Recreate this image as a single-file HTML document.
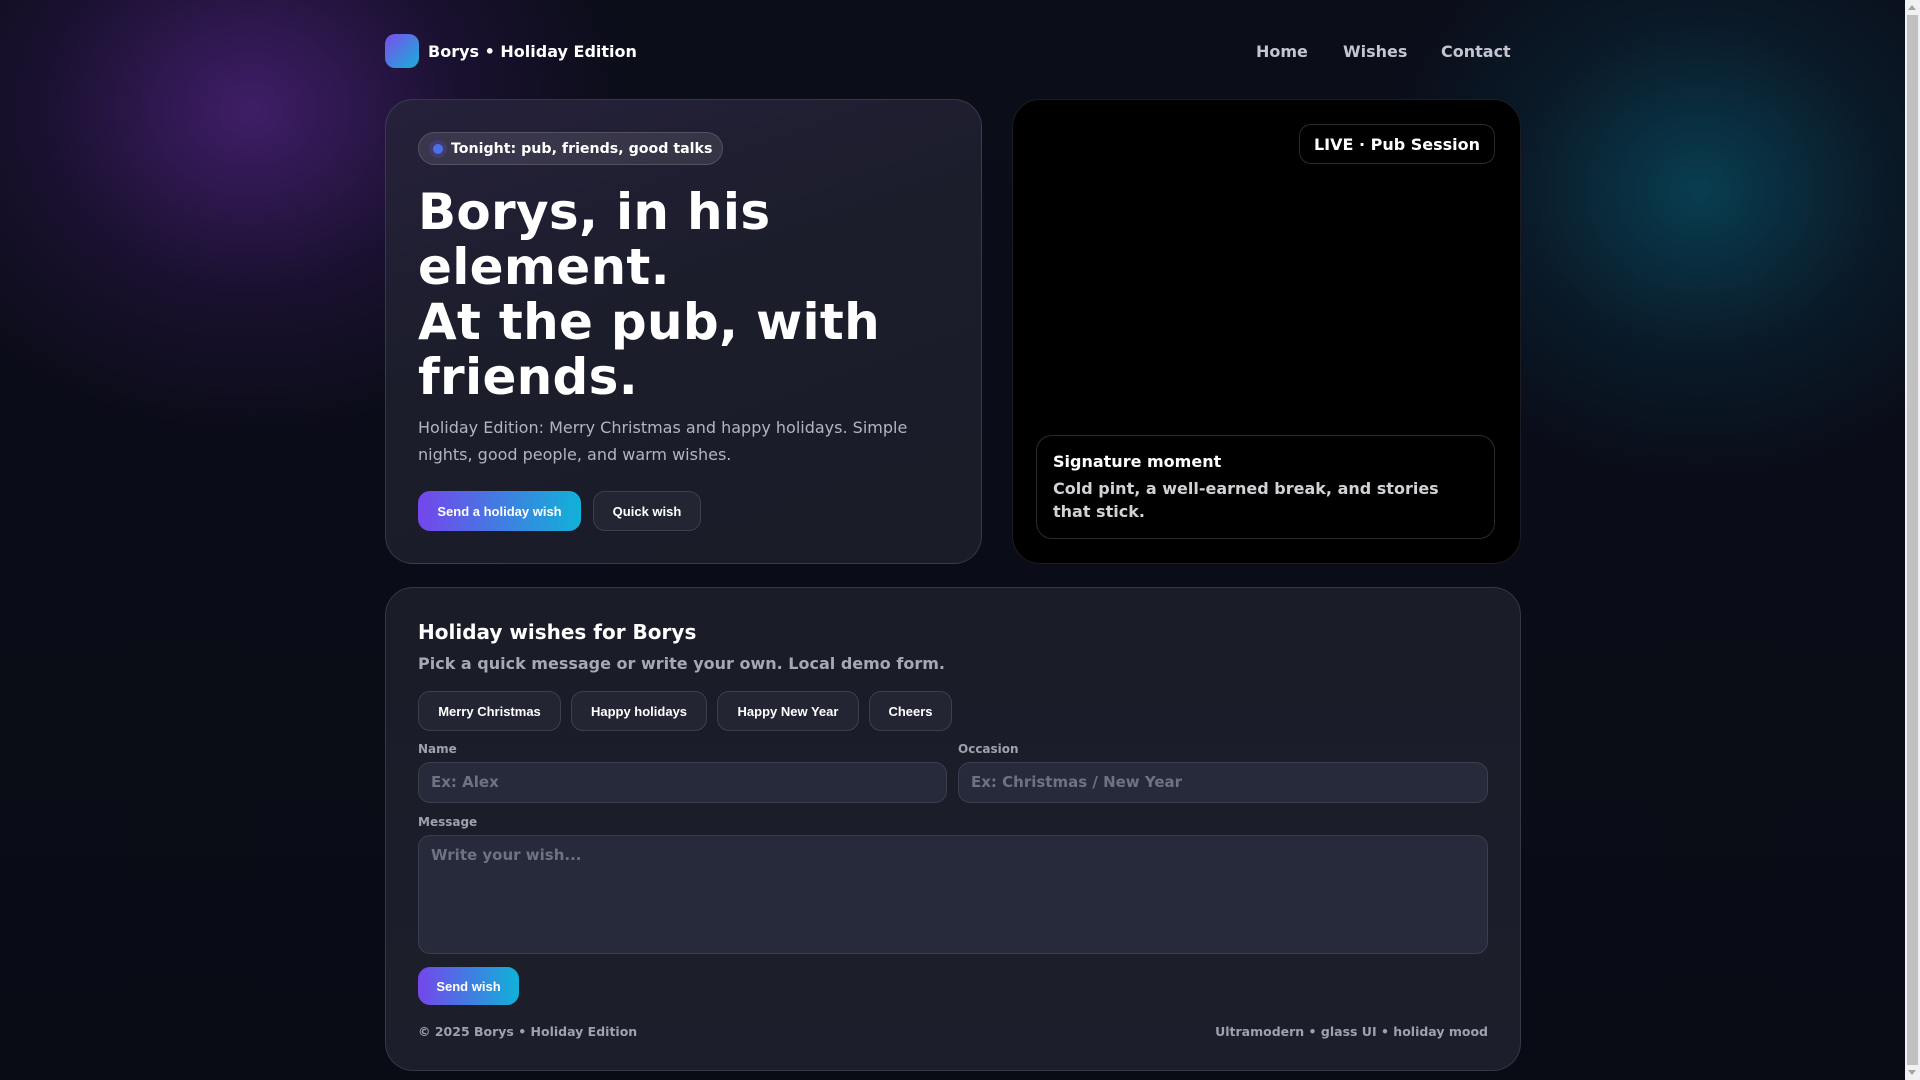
<!DOCTYPE html>
<html><head><meta charset="utf-8"><style>
*{box-sizing:border-box;margin:0;padding:0}
html,body{width:1920px;height:1080px;overflow:hidden}
body{background:#0a0c16;font-family:"DejaVu Sans","Liberation Sans",sans-serif;color:#fff;position:relative}
.bg{position:absolute;left:0;top:0;width:1905px;height:1080px;
background:radial-gradient(ellipse 380px 330px at 250px 110px,rgba(80,35,130,.75),rgba(60,25,100,.3) 55%,transparent 100%),
radial-gradient(ellipse 330px 300px at 1700px 190px,rgba(8,70,90,.85),rgba(8,50,70,.35) 55%,transparent 100%),
linear-gradient(#0b0d19,#090b15);}
.sb{position:absolute;left:1905px;top:0;width:15px;height:1080px;background:#f1f1f1}
.sb .th{position:absolute;left:2px;top:15px;width:11px;height:1050px;background:#c1c1c1}
.sb .up{position:absolute;left:3px;top:5px;border:4px solid transparent;border-bottom:5px solid #a3a3a3;border-top:0}
.sb .dn{position:absolute;left:3px;bottom:5px;border:4px solid transparent;border-top:5px solid #a3a3a3;border-bottom:0}
.a{position:absolute}
.logo{left:385px;top:34px;width:34px;height:34px;border-radius:10px;background:linear-gradient(135deg,#7c4dec,#16b0d8)}
.brand{left:428px;top:42px;font-size:16px;font-weight:bold}
.nav{top:42px;font-size:16px;font-weight:bold;color:#c3c6d0}
.card{border-radius:28px;border:1px solid rgba(255,255,255,.12)}
.hero{left:385px;top:99px;width:597px;height:465px;background:linear-gradient(160deg,#26213c,#1b1d2a 45%,#1a1c28)}
.media{left:1012px;top:99px;width:509px;height:465px;background:#000;border-color:#1c1c22}
.pill{left:418px;top:132px;height:33px;width:305px;border-radius:17px;background:rgba(255,255,255,.1);border:1px solid rgba(255,255,255,.14);font-size:14.2px;font-weight:bold;padding:8px 0 0 32px;white-space:nowrap}
.pill i{position:absolute;left:14px;top:11px;width:10px;height:10px;border-radius:50%;background:#4a72e8;box-shadow:0 0 0 4px rgba(90,70,170,.35)}
h1{position:absolute;left:418px;top:185px;font-size:50px;line-height:55px;font-weight:bold;letter-spacing:.3px}
.p{left:418px;top:414px;width:520px;font-size:16px;line-height:27px;color:#b3b5be}
.btn{height:40px;border-radius:12px;font-family:"Liberation Sans",sans-serif;font-weight:bold;font-size:13px;display:flex;align-items:center;justify-content:center}
.g{background:linear-gradient(90deg,#7446ec,#10b2d8)}
.o{background:#232632;border:1px solid #3c3f4c}
.live{left:1299px;top:124px;width:196px;height:40px;border-radius:12px;border:1px solid #2a2a30;font-size:16px;font-weight:bold;text-align:center;padding-top:10px}
.sig{left:1036px;top:435px;width:459px;height:104px;border-radius:16px;border:1px solid #2a2a30;padding:14px 16px;font-size:16px;font-weight:bold;line-height:23px}
.sig div{color:#d2d2d6}
.wish{left:385px;top:587px;width:1136px;height:484px;background:linear-gradient(180deg,#1a1c28,#1c1e2b)}
.t{left:418px;top:620px;font-size:20px;font-weight:bold}
.st{left:418px;top:654px;font-size:16px;font-weight:bold;color:#a7a9b2}
.lbl{font-size:12px;font-weight:bold;color:#9fa2ab}
.in{border-radius:12px;background:#272a3a;border:1px solid #3b3e4c;font-size:15px;font-weight:bold;color:#6f7280;padding:10px 12px}
.ft{top:1024px;font-size:12.5px;font-weight:bold;color:#9fa2ab}
</style></head><body>
<div class="bg"></div>
<div class="a logo"></div>
<div class="a brand">Borys • Holiday Edition</div>
<div class="a nav" style="left:1256px">Home</div>
<div class="a nav" style="left:1343px">Wishes</div>
<div class="a nav" style="left:1441px">Contact</div>

<div class="a card hero"></div>
<div class="a pill"><i></i>Tonight: pub, friends, good talks</div>
<h1>Borys, in his<br>element.<br>At the pub, with<br>friends.</h1>
<div class="a p">Holiday Edition: Merry Christmas and happy holidays. Simple nights, good people, and warm wishes.</div>
<div class="a btn g" style="left:418px;top:491px;width:163px">Send a holiday wish</div>
<div class="a btn o" style="left:593px;top:491px;width:108px">Quick wish</div>

<div class="a card media"></div>
<div class="a live">LIVE · Pub Session</div>
<div class="a sig">Signature moment<div style="margin-top:4px">Cold pint, a well-earned break, and stories that stick.</div></div>

<div class="a card wish"></div>
<div class="a t">Holiday wishes for Borys</div>
<div class="a st">Pick a quick message or write your own. Local demo form.</div>
<div class="a btn o" style="left:418px;top:691px;width:143px">Merry Christmas</div>
<div class="a btn o" style="left:571px;top:691px;width:136px">Happy holidays</div>
<div class="a btn o" style="left:717px;top:691px;width:142px">Happy New Year</div>
<div class="a btn o" style="left:869px;top:691px;width:83px">Cheers</div>
<div class="a lbl" style="left:418px;top:742px">Name</div>
<div class="a lbl" style="left:958px;top:742px">Occasion</div>
<div class="a in" style="left:418px;top:762px;width:529px;height:41px">Ex: Alex</div>
<div class="a in" style="left:958px;top:762px;width:530px;height:41px">Ex: Christmas / New Year</div>
<div class="a lbl" style="left:418px;top:815px">Message</div>
<div class="a in" style="left:418px;top:835px;width:1070px;height:119px">Write your wish...</div>
<div class="a btn g" style="left:418px;top:967px;width:101px;height:38px">Send wish</div>
<div class="a ft" style="left:418px">© 2025 Borys • Holiday Edition</div>
<div class="a ft" style="right:432px">Ultramodern • glass UI • holiday mood</div>

<div class="sb"><div class="up"></div><div class="th"></div><div class="dn"></div></div>
</body></html>
